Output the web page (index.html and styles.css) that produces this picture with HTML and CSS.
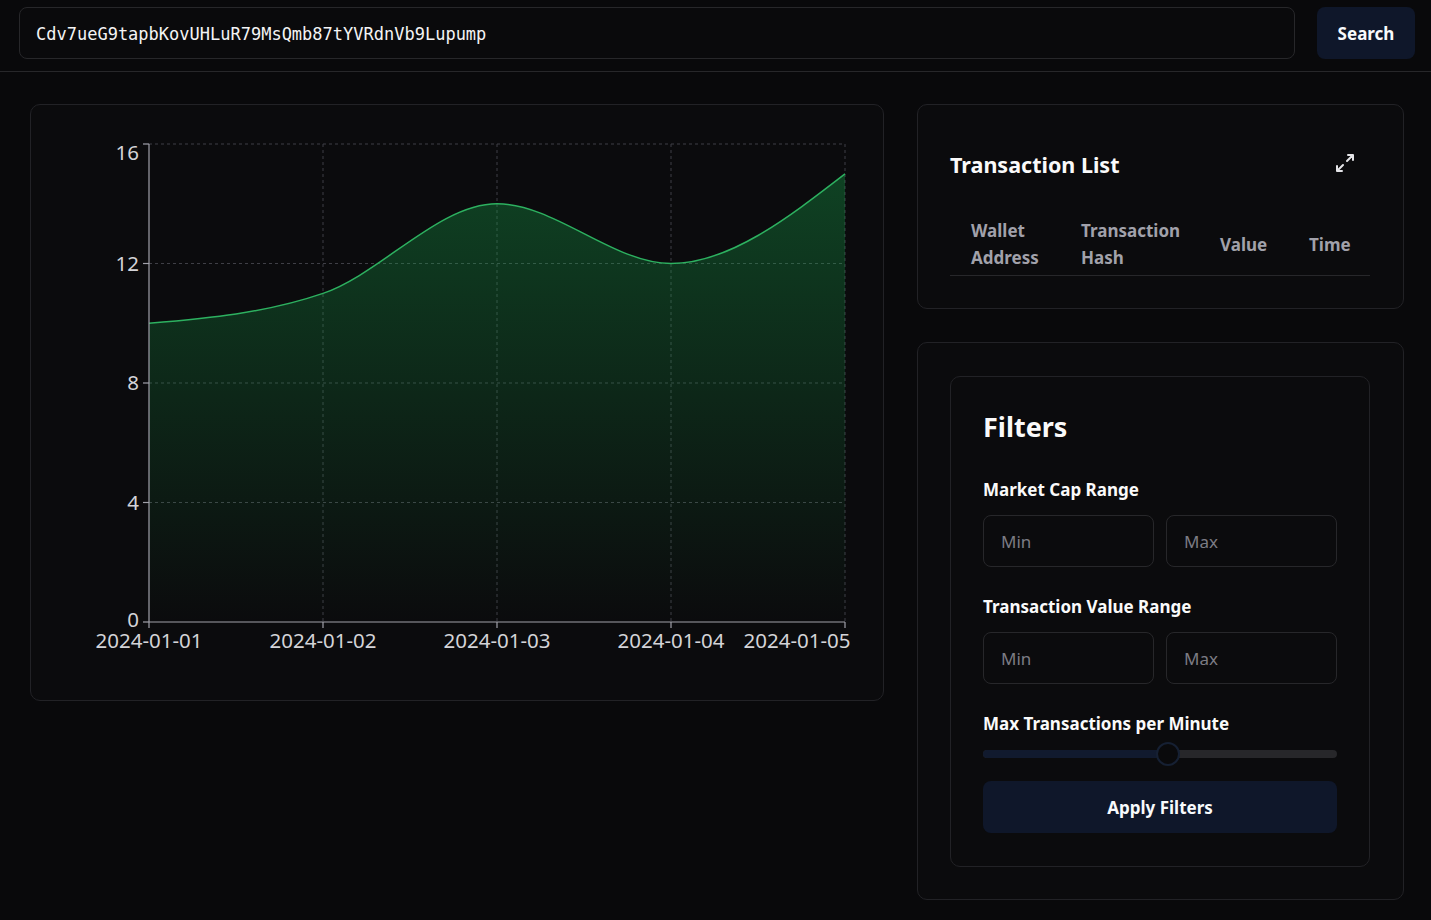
FILE: index.html
```html
<!DOCTYPE html>
<html lang="en">
<head>
<meta charset="utf-8">
<title>Token Transactions</title>
<link rel="stylesheet" href="styles.css">
</head>
<body>
<header class="topbar">
  <div class="search-box">Cdv7ueG9tapbKovUHLuR79MsQmb87tYVRdnVb9Lupump</div>
  <button class="btn search-btn">Search</button>
</header>
<main class="layout">
  <section class="card chart-card">
    <svg class="chart" width="852" height="595" viewBox="31 105 852 595" xmlns="http://www.w3.org/2000/svg">
      <defs>
        <linearGradient id="fillGrad" x1="0" y1="0" x2="0" y2="1">
          <stop offset="0%" stop-color="#16a34a" stop-opacity="0.36"/>
          <stop offset="100%" stop-color="#16a34a" stop-opacity="0"/>
        </linearGradient>
      </defs>
      <g class="grid">
        <line x1="149" y1="144" x2="845" y2="144"/>
        <line x1="149" y1="263.5" x2="845" y2="263.5"/>
        <line x1="149" y1="383" x2="845" y2="383"/>
        <line x1="149" y1="502.5" x2="845" y2="502.5"/>
        <line x1="323" y1="144" x2="323" y2="622"/>
        <line x1="497" y1="144" x2="497" y2="622"/>
        <line x1="671" y1="144" x2="671" y2="622"/>
        <line x1="845" y1="144" x2="845" y2="622"/>
      </g>
      <path class="area" d="M149,323.25 C207,318.27 265,313.29 323,293.375 C381,273.46 439,203.75 497,203.75 C555,203.75 613,263.5 671,263.5 C729,263.5 787,218.69 845,173.875 L845,622 L149,622 Z"/>
      <path class="line" d="M149,323.25 C207,318.27 265,313.29 323,293.375 C381,273.46 439,203.75 497,203.75 C555,203.75 613,263.5 671,263.5 C729,263.5 787,218.69 845,173.875"/>
      <g class="axis">
        <line x1="149" y1="144" x2="149" y2="622"/>
        <line x1="149" y1="622" x2="845" y2="622"/>
        <line x1="143" y1="144" x2="149" y2="144"/>
        <line x1="143" y1="263.5" x2="149" y2="263.5"/>
        <line x1="143" y1="383" x2="149" y2="383"/>
        <line x1="143" y1="502.5" x2="149" y2="502.5"/>
        <line x1="143" y1="622" x2="149" y2="622"/>
        <line x1="149" y1="622" x2="149" y2="628"/>
        <line x1="323" y1="622" x2="323" y2="628"/>
        <line x1="497" y1="622" x2="497" y2="628"/>
        <line x1="671" y1="622" x2="671" y2="628"/>
        <line x1="845" y1="622" x2="845" y2="628"/>
      </g>
      <g class="ticks ticks-y">
        <text x="139" y="160">16</text>
        <text x="139" y="271">12</text>
        <text x="139" y="390">8</text>
        <text x="139" y="510">4</text>
        <text x="139" y="627">0</text>
      </g>
      <g class="ticks ticks-x">
        <text x="149" y="648">2024-01-01</text>
        <text x="323" y="648">2024-01-02</text>
        <text x="497" y="648">2024-01-03</text>
        <text x="671" y="648">2024-01-04</text>
        <text x="797" y="648">2024-01-05</text>
      </g>
    </svg>
  </section>
  <aside class="side">
    <section class="card tx-card">
      <div class="tx-head">
        <h2 class="tx-title">Transaction List</h2>
        <svg class="expand-icon" width="20" height="20" viewBox="0 0 20 20" xmlns="http://www.w3.org/2000/svg">
          <path d="M13 2h5v5M18 2l-6 6M7 18H2v-5M2 18l6-6"/>
        </svg>
      </div>
      <table class="tx-table">
        <thead>
          <tr>
            <th class="c-wallet">Wallet Address</th>
            <th class="c-hash">Transaction Hash</th>
            <th class="c-value">Value</th>
            <th class="c-time">Time</th>
          </tr>
        </thead>
      </table>
    </section>
    <section class="card filters-outer">
      <div class="card filters">
        <h2 class="filters-title">Filters</h2>
        <div class="group">
          <label class="label">Market Cap Range</label>
          <div class="pair">
            <div class="field">Min</div>
            <div class="field">Max</div>
          </div>
        </div>
        <div class="group">
          <label class="label">Transaction Value Range</label>
          <div class="pair">
            <div class="field">Min</div>
            <div class="field">Max</div>
          </div>
        </div>
        <div class="group group-slider">
          <label class="label">Max Transactions per Minute</label>
          <div class="slider">
            <div class="track"><div class="range" style="width:52.4%"></div></div>
            <div class="thumb" style="left:52.4%"></div>
          </div>
        </div>
        <button class="btn apply-btn">Apply Filters</button>
      </div>
    </section>
  </aside>
</main>
</body>
</html>
```
FILE: styles.css
```css
* { box-sizing: border-box; }
html, body { margin: 0; padding: 0; }
body {
  background: #09090b;
  color: #fafafa;
  font-family: "Noto Sans", "Open Sans", sans-serif;
  width: 1431px;
  height: 920px;
  overflow: hidden;
}
.topbar {
  display: flex;
  gap: 22px;
  padding: 7px 16px 12px 19px;
  border-bottom: 1px solid #27272a;
}
.search-box {
  flex: 1;
  height: 52px;
  border: 1px solid #27272a;
  border-radius: 8px;
  background: #0a0a0c;
  display: flex;
  align-items: center;
  padding: 2px 0 0 16px;
  font-family: "DejaVu Sans Mono", "Liberation Mono", monospace;
  font-size: 17px;
  color: #f4f4f5;
}
.btn {
  border: none;
  border-radius: 8px;
  background: #0f172a;
  color: #f8fafc;
  font-family: "Noto Sans", sans-serif;
  font-weight: 700;
  font-size: 17px;
  cursor: pointer;
}
.search-btn { width: 98px; height: 52px; }
.layout {
  display: grid;
  grid-template-columns: 854px 487px;
  column-gap: 33px;
  align-items: start;
  padding: 32px 0 0 30px;
}
.card {
  border: 1px solid #222226;
  border-radius: 10px;
  background: #0b0b0d;
}
.chart-card { height: 597px; }
.chart { display: block; }
.grid line { stroke: #3f3f46; stroke-width: 1; stroke-dasharray: 3 3; }
.area { fill: url(#fillGrad); stroke: none; }
.line { fill: none; stroke: #2db160; stroke-width: 1.5; }
.axis line { stroke: #a1a1aa; stroke-width: 1.2; }
.ticks text { fill: #d4d4d8; font-family: "Noto Sans", sans-serif; font-size: 20.5px; }
.ticks-y text { text-anchor: end; }
.ticks-x text { text-anchor: middle; }
.side { display: flex; flex-direction: column; gap: 33px; }
.tx-card { padding: 45px 33px 32px 32px; }
.tx-head { display: flex; justify-content: space-between; align-items: center; height: 30px; }
.tx-title { margin: 0; font-size: 21.5px; font-weight: 700; line-height: 30px; color: #fafafa; }
.expand-icon { fill: none; stroke: #e4e4e7; stroke-width: 2; stroke-linecap: round; stroke-linejoin: round; margin: 0 15px 4px 0; }
.tx-table { margin-top: 33px; border-collapse: collapse; table-layout: fixed; width: 420px; }
.tx-table th {
  text-align: left;
  font-weight: 700;
  font-size: 17px;
  line-height: 27px;
  color: #a1a1aa;
  padding: 4px 21px 4px 21px;
  vertical-align: middle;
  border-bottom: 1px solid #27272a;
}
.c-wallet { width: 110px; }
.c-hash { width: 139px; }
.c-value { width: 89px; }
.c-time { width: 82px; }
.filters-outer { padding: 33px 33px 32px 32px; }
.filters { padding: 32px 32px 33px 32px; display: flex; flex-direction: column; }
.filters-title { margin: 0 0 33px; font-size: 27px; line-height: 36px; font-weight: 700; color: #fafafa; }
.group { display: flex; flex-direction: column; margin-bottom: 28px; }
.label { font-size: 17px; font-weight: 700; line-height: 24px; color: #fafafa; margin-bottom: 13px; }
.pair { display: flex; gap: 12px; }
.field {
  flex: 1;
  height: 52px;
  border: 1px solid #27272a;
  border-radius: 8px;
  display: flex;
  align-items: center;
  padding-left: 17px;
  font-size: 17px;
  color: #7c7c84;
}
.group-slider { margin-bottom: 13px; }
.group-slider .label { margin-bottom: 4px; }
.slider { position: relative; height: 28px; }
.track { position: absolute; left: 0; right: 0; top: 10px; height: 8px; border-radius: 4px; background: #27272a; overflow: hidden; }
.range { height: 100%; background: #111a2e; }
.thumb {
  position: absolute;
  top: 2px;
  width: 24px;
  height: 24px;
  margin-left: -12px;
  border-radius: 50%;
  background: #0a0a0c;
  border: 2px solid #162033;
}
.apply-btn { height: 52px; width: 100%; }
```
